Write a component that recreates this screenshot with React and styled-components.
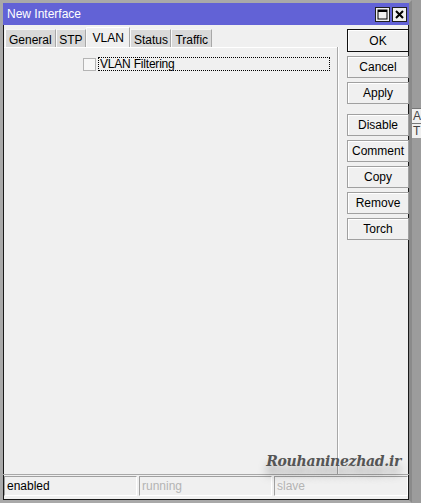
import React from "react";
import styled, { createGlobalStyle } from "styled-components";

const Global = createGlobalStyle`
  html, body { margin: 0; padding: 0; }
  body { font-family: "Liberation Sans", Arial, sans-serif; font-size: 12px; }
  #root { width: 421px; height: 503px; overflow: hidden; }
`;

const Page = styled.div`
  display: flex;
  width: 421px;
  height: 503px;
  background: #9c9c9c;
`;

const Window = styled.div`
  width: 406px;
  height: 497px;
  display: flex;
  flex-direction: column;
  background: #f0f0f0;
  border: 3px solid #a9a9a9;
  border-right-color: #8a8a8a;
  box-shadow: inset 1px 1px 0 #1a1a1a, inset -1px -1px 0 #1a1a1a;
`;

const TitleBar = styled.div`
  height: 22px;
  display: flex;
  align-items: center;
  justify-content: space-between;
  background: #6262d6;
  color: #fff;
  padding: 0 2px 0 4px;
  font-size: 12px;
`;

const TitleButtons = styled.div`
  display: flex;
  gap: 2px;
`;

const TitleBtn = styled.div`
  width: 13px;
  height: 13px;
  background: #f0f0f0;
  border: 1px solid #202020;
  display: flex;
  align-items: center;
  justify-content: center;
`;

const Main = styled.div`
  flex: 1;
  display: flex;
  min-height: 0;
`;

const LeftPane = styled.div`
  width: 333px;
  display: flex;
  flex-direction: column;
  border-right: 1px solid #a8a8a8;
  box-shadow: 1px 0 0 #ffffff;
  margin-top: 22px;
  padding-left: 1px;
`;

const Tabs = styled.div`
  display: flex;
  align-items: flex-end;
  height: 20px;
  margin-top: -20px;
  padding-left: 1px;
`;

const Tab = styled.div`
  height: ${(p) => (p.$active ? 20 : 18)}px;
  padding: 0 ${(p) => p.$pad}px;
  display: flex;
  align-items: center;
  background: ${(p) => (p.$active ? "#f0f0f0" : "#d9d9d9")};
  border-top: 1px solid ${(p) => (p.$active ? "#ffffff" : "#f4f4f4")};
  border-left: 1px solid #fafafa;
  border-right: 1px solid #a8a8a8;
  color: #000;
  font-size: 12px;
  box-sizing: border-box;
  padding-top: ${(p) => (p.$active ? 0 : 2)}px;
`;

const Panel = styled.div`
  flex: 1;
  border-top: 1px solid #ffffff;
  padding: 9px 0 0 79px;
`;

const CheckRow = styled.div`
  display: flex;
  align-items: center;
  gap: 2px;
`;

const Check = styled.div`
  width: 11px;
  height: 11px;
  background: #f7f7f7;
  border: 1px solid #b4b4b4;
`;

const FocusLabel = styled.div`
  width: 229px;
  height: 12px;
  line-height: 12px;
  border: 1px dotted #000;
  padding: 0 0 0 1px;
  font-size: 12px;
  letter-spacing: -0.2px;
`;

const ButtonCol = styled.div`
  flex: 1;
  display: flex;
  flex-direction: column;
  padding: 4px 0 0 9px;
`;

const Btn = styled.div`
  width: 60px;
  height: ${(p) => (p.$default ? 21 : 20)}px;
  display: flex;
  align-items: center;
  justify-content: center;
  background: #f0f0f0;
  border: 1px solid ${(p) => (p.$default ? "#111" : "#a0a0a0")};
  box-shadow: inset 1px 1px 0 #fff;
  margin-top: ${(p) => p.$mt}px;
  font-size: 12px;
  color: #000;
`;

const StatusBar = styled.div`
  height: 23px;
  display: flex;
  gap: 2px;
  padding: 1px 0 1px 1px;
  position: relative;
  border-top: 1px solid #a8a8a8;
`;

const Field = styled.div`
  width: ${(p) => p.$w}px;
  height: 20px;
  display: flex;
  align-items: center;
  padding-left: 2px;
  box-sizing: border-box;
  border: 1px solid #a0a0a0;
  border-right-color: #fff;
  border-bottom-color: #fff;
  color: ${(p) => (p.$dim ? "#b4b4b4" : "#000")};
  font-size: 12px;
`;

const Watermark = styled.div`
  position: absolute;
  right: 8px;
  top: -22px;
  font-family: "DejaVu Serif", serif;
  font-style: italic;
  font-weight: bold;
  font-size: 14px;
  color: #555;
  letter-spacing: -0.3px;
  text-shadow: 0 9px 10px rgba(0, 0, 0, 0.35);
`;

const Outside = styled.div`
  flex: 1;
  display: flex;
  flex-direction: column;
  padding-top: 108px;
  font-size: 12px;
  color: #444;
`;

const OutRow = styled.div`
  height: 14px;
  background: #f0f0f0;
  border-top: 1px solid #777;
  padding-left: 1px;
  line-height: 14px;
`;

export default function App() {
  const buttons = [
    { t: "OK", mt: 0, d: true },
    { t: "Cancel", mt: 4 },
    { t: "Apply", mt: 4 },
    { t: "Disable", mt: 10 },
    { t: "Comment", mt: 4 },
    { t: "Copy", mt: 4 },
    { t: "Remove", mt: 4 },
    { t: "Torch", mt: 4 },
  ];
  return (
    <>
      <Global />
      <Page>
        <Window>
          <TitleBar>
            <span>New Interface</span>
            <TitleButtons>
              <TitleBtn>
                <svg width="11" height="11" viewBox="0 0 11 11">
                  <rect x="1" y="1" width="9" height="9" fill="none" stroke="#000" strokeWidth="1" />
                  <rect x="1" y="1" width="9" height="2" fill="#000" />
                </svg>
              </TitleBtn>
              <TitleBtn>
                <svg width="11" height="11" viewBox="0 0 11 11">
                  <path d="M2 2 L9 9 M9 2 L2 9" stroke="#000" strokeWidth="2" />
                </svg>
              </TitleBtn>
            </TitleButtons>
          </TitleBar>
          <Main>
            <LeftPane>
              <Tabs>
                <Tab $pad={3}>General</Tab>
                <Tab $pad={2.5}>STP</Tab>
                <Tab $pad={5.5} $active>VLAN</Tab>
                <Tab $pad={2.5}>Status</Tab>
                <Tab $pad={3}>Traffic</Tab>
              </Tabs>
              <Panel>
                <CheckRow>
                  <Check />
                  <FocusLabel>VLAN Filtering</FocusLabel>
                </CheckRow>
              </Panel>
            </LeftPane>
            <ButtonCol>
              {buttons.map((b) => (
                <Btn key={b.t} $mt={b.mt} $default={b.d}>
                  {b.t}
                </Btn>
              ))}
            </ButtonCol>
          </Main>
          <StatusBar>
            <Field $w={133}>enabled</Field>
            <Field $w={133} $dim>running</Field>
            <Field $w={134} $dim>slave</Field>
            <Watermark>Rouhaninezhad.ir</Watermark>
          </StatusBar>
        </Window>
        <Outside>
          <OutRow>A</OutRow>
          <OutRow>T</OutRow>
        </Outside>
      </Page>
    </>
  );
}
